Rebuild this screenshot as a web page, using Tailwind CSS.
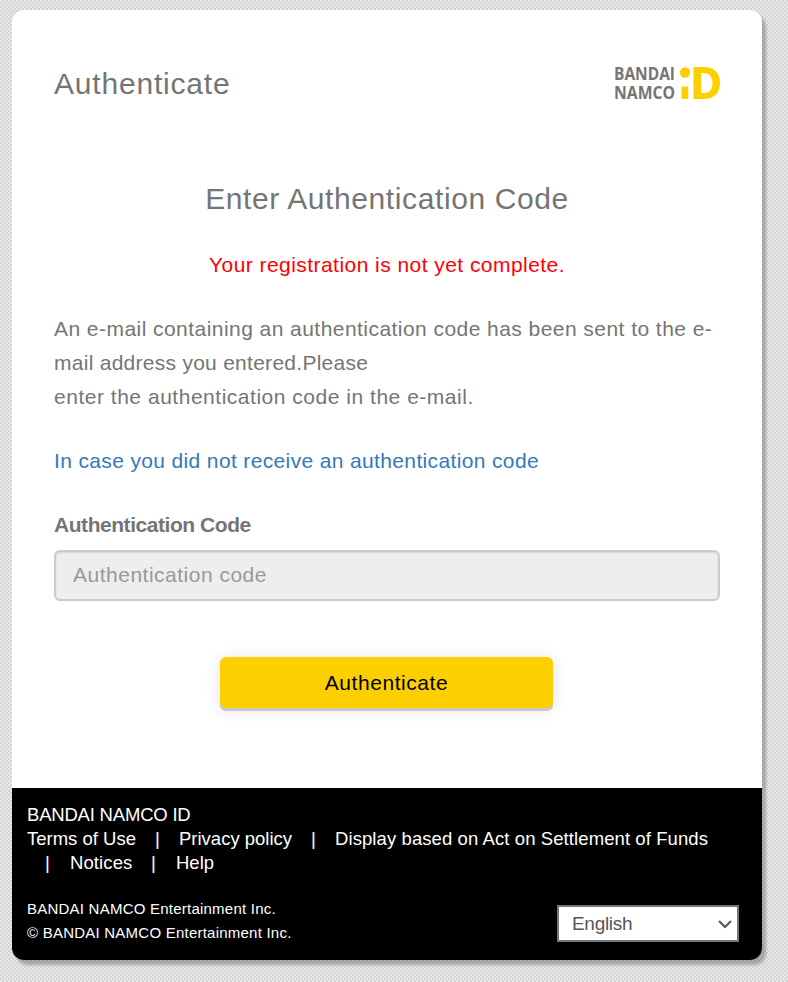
<!DOCTYPE html>
<html lang="en">

<head>
	<title>Authenticate</title>
	<meta charset="UTF-8" />
	<script src="https://cdn.jsdelivr.net/npm/@tailwindcss/browser@4"></script>
</head>

<body class="h-[982px] overflow-hidden pt-[10px] pl-3 bg-[#e6e6e6] bg-[conic-gradient(#d3d3d3_25%,#e9e9e9_0_50%,#d3d3d3_0_75%,#e9e9e9_0)] bg-[length:4px_4px] font-['Liberation_Sans',Arial,sans-serif] text-[21px] text-[#757575]">

	<div class="w-[750px] h-[950px] flex flex-col bg-white rounded-xl overflow-hidden shadow-[4px_5px_3px_rgba(0,0,0,0.25)]">

		<header class="flex items-center justify-between px-[42px] pt-[52px] h-[96px]">
			<h1 class="text-[30px] leading-[42px] tracking-[0.8px]">Authenticate</h1>
			<svg class="w-[107px] h-[36px] overflow-visible" viewBox="-1 1 107 36">
				<g fill="#757575" font-family="Open Sans, sans-serif" font-weight="700" font-size="17">
					<text x="0" y="15" textLength="61" lengthAdjust="spacingAndGlyphs">BANDAI</text>
					<text x="0" y="33.5" textLength="61" lengthAdjust="spacingAndGlyphs">NAMCO</text>
				</g>
				<g fill="#fcd000">
					<circle cx="71" cy="7.5" r="5.2" />
					<rect x="67.5" y="21.5" width="6.8" height="12.5" />
					<path fill-rule="evenodd" d="M79.5 2h10.500c10 0 16 6 16 16s-6 16-16 16H79.500zM87 8v20h3c5.500 0 8.500-4 8.500-10s-3-10-8.500-10z" />
				</g>
			</svg>
		</header>

		<main class="flex-1 px-[42px] pt-[72px]">
			<h2 class="text-[30px] leading-[42px] tracking-[0.6px] text-center">Enter Authentication Code</h2>

			<p class="mt-[28px] leading-[34px] tracking-[0.45px] text-center text-[#ff0000]">Your registration is not yet complete.</p>

			<p class="mt-[30px] leading-[34px] tracking-[0.45px] whitespace-nowrap">
				An e-mail containing an authentication code has been sent to the e-<br>
				<span class="tracking-[0.27px]">mail address you entered.Please</span><br>
				<span class="tracking-[0.52px]">enter the authentication code in the e-mail.</span>
			</p>

			<a href="#" class="block mt-[30px] leading-[34px] tracking-[0.36px] text-[#337ab7]">In case you did not receive an authentication code</a>

			<label for="code" class="block mt-[30px] leading-[34px] font-bold tracking-[-0.45px]">Authentication Code</label>
			<input id="code" type="text" placeholder="Authentication code"
				class="block mt-[8px] w-full h-[51px] px-[17px] pb-[2px] rounded-md border-2 border-[#cccccc] bg-[#eeeeee] tracking-[0.5px] placeholder:text-[#999999] shadow-[inset_0_1px_2px_rgba(0,0,0,0.1)]" />

			<button class="block ml-[166px] mt-[56px] w-[333px] h-[51px] rounded-md bg-[#fcd000] text-black tracking-[0.55px] shadow-[0_3px_0_#c8c8c8,0_2px_16px_rgba(0,0,0,0.12)]">Authenticate</button>
		</main>

		<footer class="h-[172px] px-[15px] pt-[15px] bg-black text-white text-[18.5px] leading-6">
			<p class="tracking-[-0.2px]">BANDAI NAMCO ID</p>
			<div class="flex">
				<a href="#" class="w-[128px]">Terms of Use</a>
				<span class="w-[24px]">|</span>
				<a href="#" class="w-[132px]">Privacy policy</a>
				<span class="w-[24px]">|</span>
				<a href="#" class="whitespace-nowrap tracking-[0.09px]">Display based on Act on Settlement of Funds</a>
			</div>
			<div class="flex pl-[18px]">
				<span class="w-[25px]">|</span>
				<a href="#" class="w-[81px] tracking-[0.1px]">Notices</a>
				<span class="w-[25px]">|</span>
				<a href="#">Help</a>
			</div>

			<div class="flex items-start justify-between mt-[22px] pr-[8px]">
				<div class="text-[15px] tracking-[0.23px]">
					<p>BANDAI NAMCO Entertainment Inc.</p>
					<p>© BANDAI NAMCO Entertainment Inc.</p>
				</div>
				<div class="flex items-center justify-between w-[182px] h-[37px] mt-[8px] pl-[13px] pr-[4px] border-2 border-[#767676] bg-white text-[#555555] text-[19px] tracking-[-0.3px]">
					<span>English</span>
					<svg class="w-[16px] h-[16px]" viewBox="0 0 16 16" fill="none" stroke="#555555" stroke-width="2">
						<path d="M2 5l6 6 6-6" />
					</svg>
				</div>
			</div>
		</footer>
	</div>

</body>

</html>
